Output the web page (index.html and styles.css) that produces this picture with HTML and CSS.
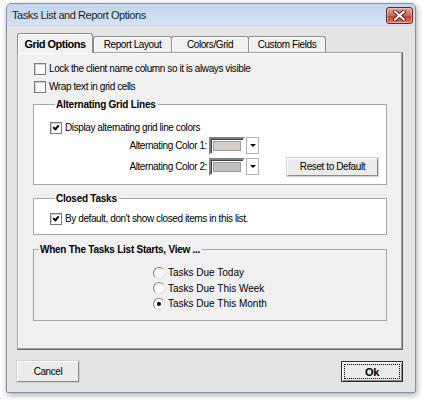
FILE: index.html
```html
<html>
	<head>
		<title>Tasks List and Report Options</title>
		<link rel="stylesheet" href="styles.css">
	</head>
	<body>
		<div class="window">
			<div class="titlebar">
				<span class="title">Tasks List and Report Options</span>
				<span class="close">
					<svg width="13" height="11" viewBox="0 0 13 11">
						<path d="M2 1.5 L11 9.5 M11 1.5 L2 9.5" stroke="#5a1a12" stroke-width="4" stroke-linecap="round"/>
						<path d="M2 1.5 L11 9.5 M11 1.5 L2 9.5" stroke="#ffffff" stroke-width="2.2" stroke-linecap="round"/>
					</svg>
				</span>
			</div>
			<div class="client">
				<div class="tabs">
					<div class="tab active">Grid Options</div>
					<div class="tab tabReport">Report Layout</div>
					<div class="tab tabColors">Colors/Grid</div>
					<div class="tab tabCustom">Custom Fields</div>
				</div>
				<div class="panel">
					<div class="options">
						<label class="check"><span class="box"></span>Lock the client name column so it is always visible</label>
						<label class="check"><span class="box"></span>Wrap text in grid cells</label>
					</div>

					<fieldset class="group groupWhite groupGrid">
						<legend>Alternating Grid Lines</legend>
						<label class="check"><span class="box checked"></span>Display alternating grid line colors</label>
						<div class="colorRow firstColor">
							<span class="colorLabel">Alternating Color 1:</span>
							<span class="swatch"><span class="fill fill1"></span></span>
							<span class="arrow"></span>
						</div>
						<div class="colorRow">
							<span class="colorLabel">Alternating Color 2:</span>
							<span class="swatch"><span class="fill fill2"></span></span>
							<span class="arrow"></span>
							<span class="button reset">Reset to Default</span>
						</div>
					</fieldset>

					<fieldset class="group groupWhite groupClosed">
						<legend>Closed Tasks</legend>
						<label class="check"><span class="box checked"></span>By default, don't show closed items in this list.</label>
					</fieldset>

					<fieldset class="group groupView">
						<legend>When The Tasks List Starts, View ...</legend>
						<div class="radios">
							<label class="radio"><span class="dot"></span>Tasks Due Today</label>
							<label class="radio"><span class="dot"></span>Tasks Due This Week</label>
							<label class="radio"><span class="dot selected"></span>Tasks Due This Month</label>
						</div>
					</fieldset>
				</div>
				<div class="buttons">
					<span class="button dialogButton">Cancel</span>
					<span class="button dialogButton default"><span class="focus">Ok</span></span>
				</div>
			</div>
		</div>
	</body>
</html>
```

FILE: styles.css
```css
body{
	margin: 0;
	background: #ffffff;
	font-family: "Liberation Sans", Arial, sans-serif;
	font-size: 10px;
	letter-spacing: -0.4px;
	color: #000000;
}
.window{
	margin: 3px 0 0 6px;
	width: 408px;
	height: 388px;
	border: 1px solid #7f93ab;
	border-radius: 5px 5px 2px 2px;
	background: #e4e4e4;
	box-shadow: 1px 2px 6px rgba(0, 0, 0, 0.35);
	display: flex;
	flex-direction: column;
	overflow: hidden;
}
.titlebar{
	height: 21px;
	display: flex;
	align-items: center;
	justify-content: space-between;
	padding: 0 2px 0 5px;
	background: linear-gradient(#c1d5ec, #d5e3f2);
	border-bottom: 1px solid #c9d7e6;
}
.title{
	font-size: 11px;
	letter-spacing: -0.45px;
	color: #1e1e1e;
}
.close{
	width: 25px;
	height: 15px;
	margin-top: 2px;
	border: 1px solid #5d2b24;
	border-radius: 3px;
	background: linear-gradient(#e8a493, #d06650 50%, #c0402a 51%, #d9765c);
	display: flex;
	align-items: center;
	justify-content: center;
	box-shadow: inset 0 0 0 1px rgba(255, 220, 210, 0.5);
}
.client{
	flex: 1;
	padding: 6px 0 0 10px;
	display: flex;
	flex-direction: column;
}
.tabs{
	display: flex;
	align-items: flex-end;
	height: 20px;
}
.tab{
	height: 15px;
	line-height: 15px;
	border: 1px solid #8c8c8c;
	border-bottom: none;
	border-radius: 3px 3px 0 0;
	background: #f0f0f0;
	text-align: center;
	margin-left: -1px;
	box-shadow: inset 1px 1px 0 #ffffff;
}
.tab.active{
	height: 19px;
	line-height: 20px;
	width: 74px;
	margin-left: 0;
	margin-bottom: -1px;
	position: relative;
	z-index: 1;
	font-weight: bold;
	font-size: 11px;
	letter-spacing: -0.5px;
}
.tabReport{ width: 77px; margin-left: 0; }
.tabColors{ width: 76px; }
.tabCustom{ width: 76px; }
.panel{
	width: 384px;
	height: 296px;
	background: #f0f0f0;
	border: 1px solid;
	border-color: #a0a0a0 #696969 #696969 #a0a0a0;
	box-shadow: inset -1px -1px 0 #a0a0a0, inset 1px 1px 0 #ffffff;
}
.options{
	padding: 9px 0 0 16px;
	display: flex;
	flex-direction: column;
	gap: 5px;
}
.check, .radio{
	display: flex;
	align-items: center;
	height: 13px;
}
.radio{
	letter-spacing: 0;
}
.box{
	width: 10px;
	height: 10px;
	margin-right: 3px;
	background: #ffffff;
	border: 1px solid #7a7a7a;
	box-shadow: inset 1px 1px 0 #d0d0d0;
	display: flex;
	align-items: center;
	justify-content: center;
}
.box.checked::after{
	content: "";
	width: 4px;
	height: 2px;
	border-left: 2px solid #000000;
	border-bottom: 2px solid #000000;
	transform: rotate(-50deg);
	margin-top: -2px;
}
.group{
	box-sizing: border-box;
	margin: 0 0 0 15px;
	width: 354px;
	padding: 0;
	border: 1px solid #a6a6a6;
	min-width: 0;
}
.group legend{
	font-weight: bold;
	font-size: 10px;
	letter-spacing: -0.25px;
	padding: 0 2px 0 1px;
	margin-left: 5px;
	line-height: 13px;
}
.groupWhite{
	background: #ffffff;
}
.groupGrid{
	margin-top: 5px;
	height: 87px;
	padding: 10px 0 0 16px;
}
.colorRow{
	display: flex;
	align-items: center;
	height: 17px;
	margin-top: 4px;
}
.firstColor{
	margin-top: 3px;
}
.colorLabel{
	width: 157px;
	text-align: right;
	margin-right: 2px;
}
.swatch{
	width: 31px;
	height: 13px;
	border: 2px solid;
	border-color: #808080 #ffffff #ffffff #808080;
	box-shadow: inset 1px 1px 0 #404040;
	display: flex;
	padding: 1px 0 0 1px;
}
.fill{
	flex: 1;
	margin: 1px 2px 2px 1px;
	border: 1px solid #9c9c9c;
}
.fill1{ background: #d4d0c8; }
.fill2{ background: #c0c0c0; }
.arrow{
	width: 11px;
	height: 15px;
	margin-left: 1px;
	background: #ffffff;
	border: 1px solid #b0b0b0;
	display: flex;
	align-items: center;
	justify-content: center;
}
.arrow::after{
	content: "";
	border-left: 3px solid transparent;
	border-right: 3px solid transparent;
	border-top: 3px solid #000000;
}
.button{
	display: flex;
	align-items: center;
	justify-content: center;
	background: #ebebeb;
	border: 1px solid;
	border-color: #ffffff #8a8a8a #8a8a8a #ffffff;
	box-shadow: 0 0 0 1px #d0d0d0;
}
.reset{
	width: 89px;
	height: 16px;
	margin-left: 28px;
}
.groupClosed{
	margin-top: 7px;
	height: 43px;
	padding: 7px 0 0 16px;
}
.groupView{
	margin-top: 8px;
	height: 78px;
}
.radios{
	display: flex;
	flex-direction: column;
	gap: 2.5px;
	padding: 10px 0 0 119px;
}
.dot{
	width: 10px;
	height: 10px;
	border-radius: 50%;
	margin-right: 3px;
	background: #ffffff;
	border: 1px solid;
	border-color: #808080 #e0e0e0 #e0e0e0 #808080;
	display: flex;
	align-items: center;
	justify-content: center;
}
.dot.selected::after{
	content: "";
	width: 4px;
	height: 4px;
	border-radius: 50%;
	background: #000000;
}
.buttons{
	display: flex;
	justify-content: space-between;
	width: 386px;
	margin-top: 11px;
}
.dialogButton{
	width: 60px;
	height: 19px;
}
.default{
	border: 1px solid #2c2c2c;
	box-shadow: inset 1px 1px 0 #ffffff, inset -1px -1px 0 #8a8a8a;
	font-weight: bold;
	font-size: 11px;
}
.focus{
	width: 54px;
	height: 13px;
	border: 1px dotted #000000;
	display: flex;
	align-items: center;
	justify-content: center;
}
```
